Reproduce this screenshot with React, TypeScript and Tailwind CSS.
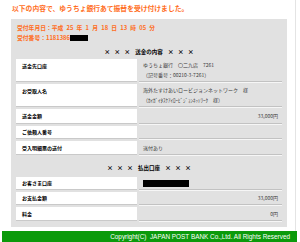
const jp = { fontFamily: '"Noto Sans CJK JP", "Noto Sans", sans-serif' };

type Row = {
  label: string;
  lines: React.ReactNode[];
  h: string;
  right?: boolean;
};

const sendRows: Row[] = [
  {
    label: "送金先口座",
    lines: ["ゆうちょ銀行\u3000〇二九店\u30007261", "（記号番号：00210-3-7261）"],
    h: "h-[23px]",
  },
  {
    label: "お受取人名",
    lines: [
      "海外たすけあいロービジョンネットワーク\u3000様",
      "（ｶｲｶﾞｲﾀｽｹｱｲﾛｰﾋﾞｼﾞｮﾝﾈｯﾄﾜｰｸ\u3000様）",
    ],
    h: "h-[23px]",
  },
  { label: "送金金額", lines: ["33,000円"], h: "h-[15px]", right: true },
  { label: "ご依頼人番号", lines: [""], h: "h-[13px]" },
  { label: "受入明細票の送付", lines: ["送付あり"], h: "h-[14px]" },
];

const payRows: Row[] = [
  {
    label: "お客さま口座",
    lines: [<span key="b" className="inline-block w-[46px] h-[7px] bg-black align-middle" />],
    h: "h-[13px]",
  },
  { label: "お支払金額", lines: ["33,000円"], h: "h-[13px]", right: true },
  { label: "料金", lines: ["0円"], h: "h-[14px]", right: true },
];

const dateParts = ["受付年月日：平成", "25", "年", "1", "月", "18", "日", "13", "時", "05", "分"];

function TableRow({ row }: { row: Row }) {
  const multi = row.lines.length > 1;
  return (
    <div className={`flex ${row.h}`}>
      <div
        className={`w-[121px] bg-white border-b border-[#c9c9c9] pl-[6px] font-bold text-[5px] text-black flex ${
          multi ? "items-start pt-[3px]" : "items-center"
        }`}
      >
        {row.label}
      </div>
      <div
        className={`flex-1 ml-[2px] border-b border-[#c2c2c2] shadow-[0_1px_0_#f6f6f6] pl-[4px] pr-[4px] text-[5px] text-[#3a3a3a] leading-[9.5px] flex flex-col ${
          multi ? "justify-start pt-[1px]" : "justify-center"
        } ${row.right ? "items-end" : "items-start"}`}
      >
        {row.lines.map((l, i) => (
          <div key={i}>{l}</div>
        ))}
      </div>
    </div>
  );
}

function Heading({ text }: { text: string }) {
  return (
    <div className="flex justify-center items-center gap-[4px] font-bold text-[5.5px] leading-[10px] text-black">
      <span className="text-[6px]">×</span>
      <span className="text-[6px]">×</span>
      <span className="text-[6px] mr-[1px]">×</span>
      <span>{text}</span>
      <span className="text-[6px] ml-[1px]">×</span>
      <span className="text-[6px]">×</span>
      <span className="text-[6px]">×</span>
    </div>
  );
}

export default function App() {
  return (
    <div className="w-[300px] h-[242px] bg-white overflow-hidden" style={jp}>
      <div className="w-[296px] h-[231px] border-r border-[#e4e4e4]">
        <div className="pl-[12px] pt-[4px] h-[19px] text-[6.8px] leading-[8px] font-bold text-[#ff6d1c]">
          以下の内容で、ゆうちょ銀行あて振替を受け付けました。
        </div>
        <div className="ml-[11px] w-[276px] h-[208px] bg-[#e1e1e1] pt-[4px] px-[5px]">
          <div className="flex gap-[3.2px] text-[5.8px] leading-[10px] font-bold text-[#ff6d1c] pl-[1px]">
            {dateParts.map((p, i) => (
              <span key={i}>{p}</span>
            ))}
          </div>
          <div className="text-[5.8px] leading-[10px] font-bold text-[#ff6d1c] pl-[1px] flex items-center">
            <span>受付番号：1181386</span>
            <span className="inline-block w-[18px] h-[6px] bg-black" />
          </div>
          <div className="mt-[4px]">
            <Heading text="送金の内容" />
          </div>
          <div className="mt-[2px] flex flex-col gap-[2px]">
            {sendRows.map((r) => (
              <TableRow key={r.label} row={r} />
            ))}
          </div>
          <div className="mt-[8px] mb-[4px]">
            <Heading text="払出口座" />
          </div>
          <div className="flex flex-col gap-[2px]">
            {payRows.map((r) => (
              <TableRow key={r.label} row={r} />
            ))}
          </div>
        </div>
      </div>
      <div
        className="ml-[2px] w-[295px] h-[11px] bg-[#0b9a0b] text-white text-[6.4px] flex items-center justify-end pr-[7px]"
        style={{ fontFamily: '"Liberation Sans", Arial, sans-serif' }}
      >
        Copyright(C)&nbsp;&nbsp;JAPAN POST BANK Co.,Ltd. All Rights Reserved
      </div>
    </div>
  );
}
